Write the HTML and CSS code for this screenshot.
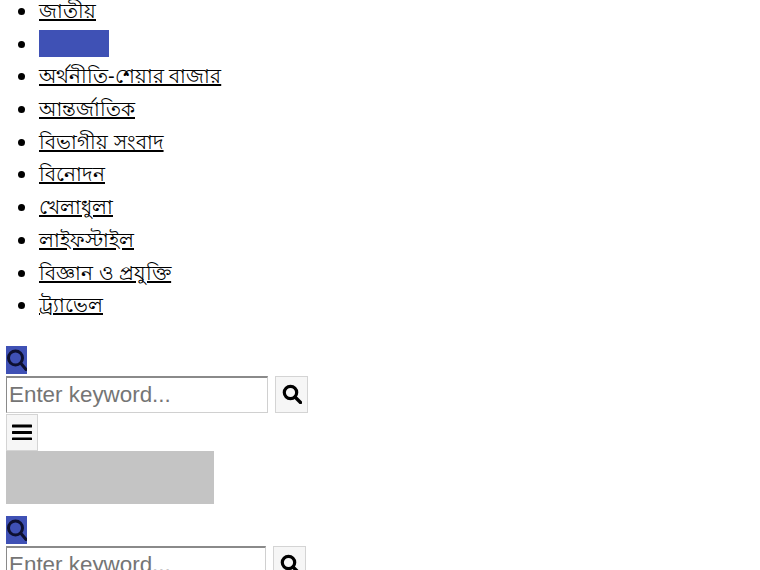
FILE: index.html
```html
<!DOCTYPE html>
<html lang="bn">
<head>
  <meta charset="UTF-8">
  <title>জাতীয়</title>
  <link rel="stylesheet" href="styles.css">
</head>
<body>
  <ul class="nav-list">
    <li><a href="#">জাতীয়</a></li>
    <li><a href="#" class="active"></a></li>
    <li><a href="#">অর্থনীতি-শেয়ার বাজার</a></li>
    <li><a href="#">আন্তর্জাতিক</a></li>
    <li><a href="#">বিভাগীয় সংবাদ</a></li>
    <li><a href="#">বিনোদন</a></li>
    <li><a href="#">খেলাধুলা</a></li>
    <li><a href="#">লাইফস্টাইল</a></li>
    <li><a href="#">বিজ্ঞান ও প্রযুক্তি</a></li>
    <li><a href="#">ট্র্যাভেল</a></li>
  </ul>

  <a href="#" class="search-toggle">
    <svg viewBox="0 0 21 26" width="21" height="26"><circle cx="9.500" cy="10" r="7" fill="none" stroke="#0d1030" stroke-width="3"/><path d="M15 15.500l5 6" stroke="#0d1030" stroke-width="3" stroke-linecap="round"/></svg>
  </a>
  <form class="search-form">
    <input type="text" class="search-input" placeholder="Enter keyword...">
    <button type="button" class="search-btn">
      <svg viewBox="0 0 20 20" width="20" height="20"><circle cx="8.5" cy="8.5" r="6.2" fill="none" stroke="#000" stroke-width="3.2"/><path d="M13 13l5.5 5.5" stroke="#000" stroke-width="3.4" stroke-linecap="round"/></svg>
    </button>
  </form>
  <button type="button" class="menu-btn">
    <svg viewBox="0 0 20 16" width="20" height="16"><path d="M1 2h18M1 8.500h18M1 15h18" stroke="#000" stroke-width="3" stroke-linecap="round"/></svg>
  </button>
  <div class="ad-box"></div>

  <a href="#" class="search-toggle">
    <svg viewBox="0 0 21 26" width="21" height="26"><circle cx="9.500" cy="10" r="7" fill="none" stroke="#0d1030" stroke-width="3"/><path d="M15 15.500l5 6" stroke="#0d1030" stroke-width="3" stroke-linecap="round"/></svg>
  </a>
  <form class="search-form search-form-low">
    <input type="text" class="search-input" placeholder="Enter keyword...">
    <button type="button" class="search-btn">
      <svg viewBox="0 0 20 20" width="20" height="20"><circle cx="8.5" cy="8.5" r="6.2" fill="none" stroke="#000" stroke-width="3.2"/><path d="M13 13l5.500 5.500" stroke="#000" stroke-width="3.4" stroke-linecap="round"/></svg>
    </button>
  </form>
</body>
</html>
```

FILE: styles.css
```css
html {
  overflow: hidden;
  height: 570px;
}
body {
  margin: 0;
  padding: 0 6px;
  background: #fff;
  color: #000;
  font-family: "Liberation Sans", "Noto Sans", sans-serif;
}

.nav-list {
  margin: -6px 0 0;
  padding: 0 0 0 33px;
  font-size: 20px;
  line-height: 32.7px;
}
.nav-list li {
  height: 32.7px;
}
.nav-list li::marker {
  font-size: 24px;
}
.nav-list a {
  color: #000;
}
.nav-list .active {
  display: inline-block;
  vertical-align: middle;
  width: 70px;
  height: 27px;
  margin-top: -4px;
  background: #3f51b5;
}

.search-toggle {
  display: block;
  width: 21px;
  height: 28px;
  margin-top: 25px;
  padding-top: 2px;
  box-sizing: border-box;
  background: #3f51b5;
}
.search-toggle svg {
  display: block;
}

.search-form {
  display: flex;
  gap: 7px;
  margin-top: 2px;
}
.search-input {
  box-sizing: border-box;
  width: 262px;
  height: 37px;
  padding: 1px 2px;
  border: 1px solid #d0d0d0;
  border-top: 2px solid #8a8a8a;
  border-left: 1px solid #8a8a8a;
  font-family: "Liberation Sans", sans-serif;
  font-size: 22.4px;
}
.search-input::placeholder {
  color: #757575;
}
.search-btn,
.menu-btn {
  display: flex;
  align-items: center;
  justify-content: center;
  box-sizing: border-box;
  padding: 0;
  border: 1px solid #d4d4d4;
  background: #f6f6f6;
}
.search-btn {
  width: 33px;
  height: 37px;
}
.menu-btn {
  width: 32px;
  height: 37px;
  margin-top: 1px;
}

.ad-box {
  width: 208px;
  height: 53px;
  background: #c4c4c4;
}
.ad-box + .search-toggle {
  margin-top: 12px;
}
.search-form-low .search-input {
  width: 260px;
}
```
